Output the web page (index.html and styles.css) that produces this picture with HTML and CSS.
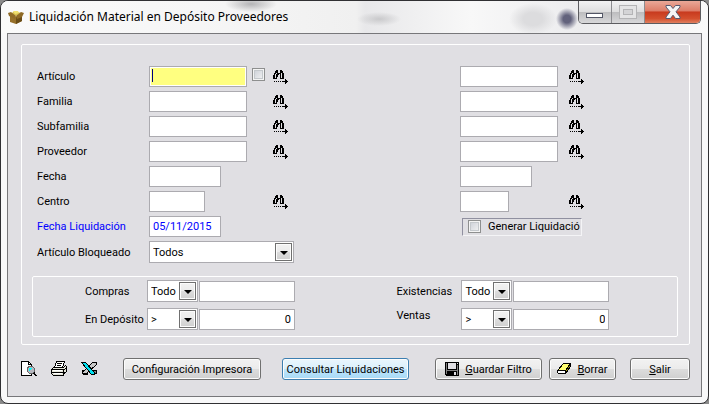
FILE: index.html
```html
<!DOCTYPE html>
<html lang="es">
<head>
    <meta charset="UTF-8">
    <title>Liquidación Material en Depósito Proveedores</title>
    <link rel="stylesheet" href="styles.css">
</head>
<body>

    <!-- iconos compartidos -->
    <svg class="sprite" width="0" height="0">
        <symbol id="find" viewBox="0 0 16 14">
            <path stroke="#000" d="M3 .5h2M7 .5h2M2 1.5h3M7 1.5h3M2 2.5h3M7 2.5h3M1 3.5h2M4 3.5h4M9 3.5h2M1 4.5h1M3 4.5h3M7 4.5h1M9 4.5h2M0 5.5h2M3 5.5h2M7 5.5h1M9 5.5h2M0 6.5h2M3 6.5h2M7 6.5h1M9 6.5h2M0 7.5h2M3 7.5h1M7 7.5h1M9 7.5h2M0 8.5h4M7 8.5h4M1 11.5h1M3 11.5h1M5 11.5h1M7 11.5h1M9 11.5h6M12 9.5h1M12 10.5h2M12 12.5h2M12 13.5h1"/>
        </symbol>
    </svg>

    <div class="window">
        <header class="titlebar">
            <svg class="app-icon" width="16" height="16" viewBox="0 0 16 16">
                <path fill="#96702a" d="M2 6l6 2 6-2v6l-6 3-6-2z"/>
                <path fill="#6a4c16" d="M8 8l6-2v6l-6 3z"/>
                <path fill="#d8c050" d="M2 5l5-3 6 2-5 3z"/>
                <path fill="#8f6a26" d="M0 4l3-1 5 4-1 3-6-3zM8 7l5-4 3 1-2 4-5 2z"/>
                <path fill="#f0e070" d="M5 2h5l1 2-4 1z"/>
            </svg>
            <h1>Liquidación Material en Depósito Proveedores</h1>
            <div class="controls">
                <button type="button" class="ctl min" aria-label="Minimizar">
                    <svg width="18" height="6" viewBox="0 0 18 6"><rect x=".5" y=".5" width="16" height="4" rx="1" fill="#fff" stroke="#535666"/></svg>
                </button>
                <button type="button" class="ctl max" aria-label="Maximizar" disabled>
                    <svg width="18" height="14" viewBox="0 0 18 14" fill="none" stroke="#b4b4b6"><rect x=".5" y=".5" width="17" height="13" rx="1" fill="#e4e4e5"/><rect x="4.500" y="4.500" width="9" height="5" fill="#d4d4d6"/></svg>
                </button>
                <button type="button" class="ctl close" aria-label="Cerrar">
                    <svg width="16" height="14" viewBox="0 0 16 14"><path fill="#f6f6f6" stroke="#565a70" stroke-linejoin="round" d="M1 .5h4.500L8 3.500 10.500.5H15V2l-4 4.800L15 12v1.500h-4.500L8 10.200 5.500 13.500H1V12l4-5.200L1 2z"/></svg>
                </button>
            </div>
        </header>

        <form class="client">
            <fieldset class="panel">
                <div class="filters">
                    <label for="articulo">Artículo</label>
                    <div class="field">
                        <input class="text active" id="articulo" type="text">
                        <input class="check" type="checkbox" aria-label="Artículo exacto">
                    </div>
                    <button type="button" class="icon" aria-label="Buscar artículo"><svg width="16" height="14"><use href="#find"/></svg></button>
                    <div class="field"><input class="text" type="text" aria-label="Artículo hasta"></div>
                    <button type="button" class="icon" aria-label="Buscar artículo hasta"><svg width="16" height="14"><use href="#find"/></svg></button>

                    <label for="familia">Familia</label>
                    <div class="field"><input class="text" id="familia" type="text"></div>
                    <button type="button" class="icon" aria-label="Buscar familia"><svg width="16" height="14"><use href="#find"/></svg></button>
                    <div class="field"><input class="text" type="text" aria-label="Familia hasta"></div>
                    <button type="button" class="icon" aria-label="Buscar familia hasta"><svg width="16" height="14"><use href="#find"/></svg></button>

                    <label for="subfamilia">Subfamilia</label>
                    <div class="field"><input class="text" id="subfamilia" type="text"></div>
                    <button type="button" class="icon" aria-label="Buscar subfamilia"><svg width="16" height="14"><use href="#find"/></svg></button>
                    <div class="field"><input class="text" type="text" aria-label="Subfamilia hasta"></div>
                    <button type="button" class="icon" aria-label="Buscar subfamilia hasta"><svg width="16" height="14"><use href="#find"/></svg></button>

                    <label for="proveedor">Proveedor</label>
                    <div class="field"><input class="text" id="proveedor" type="text"></div>
                    <button type="button" class="icon" aria-label="Buscar proveedor"><svg width="16" height="14"><use href="#find"/></svg></button>
                    <div class="field"><input class="text" type="text" aria-label="Proveedor hasta"></div>
                    <button type="button" class="icon" aria-label="Buscar proveedor hasta"><svg width="16" height="14"><use href="#find"/></svg></button>

                    <label for="fecha">Fecha</label>
                    <div class="field span2"><input class="text date" id="fecha" type="text"></div>
                    <div class="field span2"><input class="text date" type="text" aria-label="Fecha hasta"></div>

                    <label for="centro">Centro</label>
                    <div class="field"><input class="text code" id="centro" type="text"></div>
                    <button type="button" class="icon" aria-label="Buscar centro"><svg width="16" height="14"><use href="#find"/></svg></button>
                    <div class="field"><input class="text code-to" type="text" aria-label="Centro hasta"></div>
                    <button type="button" class="icon" aria-label="Buscar centro hasta"><svg width="16" height="14"><use href="#find"/></svg></button>

                    <label class="blue" for="fechaliq">Fecha Liquidación</label>
                    <div class="field span2"><input class="text date blue" id="fechaliq" type="text" value="05/11/2015"></div>
                    <div class="field span2"><label class="sunken"><input class="check" type="checkbox">Generar Liquidació</label></div>

                    <label for="bloqueado">Artículo Bloqueado</label>
                    <div class="field span2">
                        <span class="combo wide"><select id="bloqueado"><option>Todos</option></select><span class="arrow"></span></span>
                    </div>
                </div>

                <fieldset class="stock">
                    <label for="compras">Compras</label>
                    <span class="combo"><select id="compras"><option>Todo</option></select><span class="arrow"></span></span>
                    <input class="text num" type="text" aria-label="Valor compras">
                    <label for="existencias">Existencias</label>
                    <span class="combo"><select id="existencias"><option>Todo</option></select><span class="arrow"></span></span>
                    <input class="text num" type="text" aria-label="Valor existencias">

                    <label for="deposito">En Depósito</label>
                    <span class="combo"><select id="deposito"><option>&gt;</option></select><span class="arrow"></span></span>
                    <input class="text num" type="text" value="0" aria-label="Valor en depósito">
                    <label class="high" for="ventas">Ventas</label>
                    <span class="combo"><select id="ventas"><option>&gt;</option></select><span class="arrow"></span></span>
                    <input class="text num" type="text" value="0" aria-label="Valor ventas">
                </fieldset>
            </fieldset>

            <footer class="toolbar">
                <div class="tools">
                    <button type="button" class="icon" aria-label="Vista previa">
                        <svg width="16" height="16" viewBox="0 0 16 16">
                            <path fill="#fff" stroke="#000" d="M.5.5h7l3 3v11H.5z"/>
                            <path fill="none" stroke="#000" d="M7.500.5v3h3"/>
                            <path fill="#b8b8c0" stroke="#666" d="M7.500 5.500h4l2 2v3l-2 2h-3l-2-2v-3z"/>
                            <path stroke="#0ff" d="M8 7.500h3M8 8.500h2M8 9.500h1"/>
                            <path stroke="#000" d="M12 12.500h2M13 13.500h2M14 14.500h2M13 11.500h1"/>
                        </svg>
                    </button>
                    <button type="button" class="icon" aria-label="Imprimir">
                        <svg width="16" height="16" viewBox="0 0 16 16">
                            <path fill="#fff" stroke="#000" d="M5.500.5h8l-2 6h-8z"/>
                            <path stroke="#000" d="M6 2.500h5M6 4.500h4"/>
                            <path fill="#e4e4d8" stroke="#000" d="M.5 8.500l2-2h10l2-2 1 1v5l-3 3v1h-10l-2-2z"/>
                            <path stroke="#000" d="M1 8.500h11M1 11.500h11M12.500 8v6M13 8.500h1M14 7.500h1M13 11.500h2"/>
                            <path stroke="#fff" d="M2 9.500h9M3 12.500h8"/>
                        </svg>
                    </button>
                    <button type="button" class="icon" aria-label="Exportar a Excel">
                        <svg width="17" height="16" viewBox="0 0 17 16">
                            <path fill="#808080" stroke="#000" d="M1.500 9.500h4l1 3h-5zM9.500 9.500h6v3h-4z"/>
                            <path fill="#c8c8c8" stroke="#000" d="M11.500 1.500h4v2l-10 9h-4v-1z"/>
                            <path fill="#00e0f0" stroke="#000" d="M.5 1.500h4l9 10v2h-3z"/>
                            <path stroke="#000" d="M2 13.500h5"/>
                        </svg>
                    </button>
                </div>
                <button type="button" class="btn config">Configuración Impresora</button>
                <button type="submit" class="btn primary">Consultar Liquidaciones</button>
                <button type="button" class="btn save">
                    <svg width="14" height="14" viewBox="0 0 14 14">
                        <path d="M0 0h14v14H1l-1-1z"/>
                        <path fill="#e0dfe3" d="M3 1h8v6H3z"/>
                        <path fill="#808080" d="M1 1h1v11H1zM12 3h1v10h-1zM2 8h10v1H2z"/>
                        <path fill="#e0dfe3" d="M12 1h1v1h-1zM9 10h2v3H9z"/>
                    </svg>
                    <span><u>G</u>uardar Filtro</span>
                </button>
                <button type="button" class="btn clear">
                    <svg width="14" height="12" viewBox="0 0 14 12">
                        <path fill="#ffff70" stroke="#000" d="M.5 7.500l6-7h7l-5 7z"/>
                        <path fill="#fff" stroke="#000" d="M.5 7.500h8v3h-7l-1-1z"/>
                        <path fill="#a8a000" stroke="#000" d="M8.500 7.500l5-7v3l-5 7z"/>
                    </svg>
                    <span><u>B</u>orrar</span>
                </button>
                <button type="button" class="btn exit"><span><u>S</u>alir</span></button>
            </footer>
        </form>
    </div>

</body>
</html>
```
FILE: styles.css
```css
*{
    box-sizing: border-box;
    margin: 0;
    padding: 0;
}
body{
    background: #8a8a8a;
    font-family: Roboto, "Liberation Sans", Arial, sans-serif;
    font-size: 11px;
    color: #000;
}
input, select, button{
    font: inherit;
    color: inherit;
}
.sprite{
    display: none;
}
svg{
    display: block;
    flex: none;
    shape-rendering: crispEdges;
}

/* ventana */
.window{
    min-height: 100vh;
    display: flex;
    flex-direction: column;
    padding: 0 6px 6px;
    border: 1px solid #303033;
    border-radius: 8px;
    background: #f8f8f9;
    overflow: hidden;
}
.titlebar{
    display: flex;
    align-items: flex-start;
    height: 32px;
    margin: 0 -6px;
    padding: 0 7px 0 7px;
    background:
        radial-gradient(circle 11px at 566px 18px, #62627c 35%, rgba(98,98,124,0)),
        radial-gradient(ellipse 24px 16px at 532px 18px, #dcdcde 40%, rgba(220,220,222,0)),
        radial-gradient(ellipse 22px 7px at 378px 18px, #c9c9cb, rgba(208,208,210,0)),
        radial-gradient(ellipse 26px 8px at 250px 3px, #b4b4b6, rgba(190,190,192,0)),
        linear-gradient(to right, #fafafa 0, #f6f6f6 200px, #f0f0f0 355px, #e8e8ea 364px, #f8f8f8 470px, #ececee 580px, #fafafa);
}
.app-icon{
    margin-top: 8px;
    shape-rendering: auto;
}
h1{
    flex: 1;
    padding: 7px 0 0 5px;
    font: 12px/18px "Noto Sans", "Open Sans", sans-serif;
    white-space: nowrap;
}
.controls{
    display: flex;
    height: 23px;
    border: 1px solid #5c5c60;
    border-top: 0;
    border-radius: 0 0 5px 5px;
    overflow: hidden;
}
.ctl{
    display: flex;
    align-items: center;
    justify-content: center;
    width: 33px;
    border: 0;
    border-right: 1px solid #8c8c90;
    background: linear-gradient(#f2f2f3, #dededf 48%, #bdbdbf 52%, #d8d8da);
}
.min svg{
    margin-top: 8px;
}
.close{
    width: 55px;
    border-right: 0;
    background: linear-gradient(#eaa898, #dd7d68 45%, #c83a1e 50%, #d4502e 80%, #e08060);
}
.close svg{
    shape-rendering: auto;
}

/* contenido */
.client{
    flex: 1;
    padding: 10px 11px 16px 13px;
    border: 1px solid #77777a;
    background: #e0dfe3;
}
.panel{
    min-width: 0;
    padding: 21px 0 7px;
    border: 1px solid #fff;
    border-radius: 2px;
}
.filters{
    display: grid;
    grid-template-columns: 112px 124px 187fr 109px 120fr;
    grid-auto-rows: minmax(21px, auto);
    row-gap: 4px;
    align-items: center;
    padding-left: 15px;
}
.field{
    display: flex;
    align-items: flex-start;
    gap: 5px;
}
.span2{
    grid-column: span 2;
}
.blue{
    color: #00f;
}
.text{
    width: 98px;
    height: 21px;
    padding: 0 3px;
    border: 1px solid #acabb0;
    background: #fff;
    outline: none;
}
.active{
    box-shadow: inset 0 0 0 1px #fff;
    background: linear-gradient(#000080, #000080) 2px 2px / 1px 13px no-repeat #ffff80;
}
.date{
    width: 72px;
}
.code{
    width: 56px;
}
.code-to{
    width: 49px;
}
.check{
    appearance: none;
    flex: none;
    width: 13px;
    height: 13px;
    border: 1px solid #8e8f8f;
    box-shadow: inset 0 0 0 1px #f4f4f4, inset 0 0 0 2px #c4c8cc;
    background: linear-gradient(135deg, #c8ccd4, #f6f6f6);
}
.field > .check{
    margin-top: 2px;
}
.icon{
    border: 0;
    background: none;
    justify-self: start;
}
.sunken{
    display: flex;
    align-items: center;
    gap: 7px;
    width: 120px;
    height: 18px;
    margin-left: 2px;
    padding-left: 5px;
    border: 1px solid;
    border-color: #9090a0 #f4f4f6 #f4f4f6 #9090a0;
    white-space: nowrap;
}

/* desplegables */
.combo{
    display: grid;
    grid-template-columns: 1fr 17px;
    align-items: center;
    width: 51px;
    height: 22px;
    padding-right: 1px;
    border: 1px solid #acabb0;
    background: #fff;
}
.wide{
    width: 145px;
}
.combo select{
    grid-area: 1 / 1 / 2 / 3;
    appearance: none;
    height: 20px;
    padding-left: 3px;
    border: 0;
    background: none;
    outline: none;
}
.arrow{
    grid-area: 1 / 2;
    display: flex;
    align-items: center;
    justify-content: center;
    height: 18px;
    border: 1px solid #707070;
    box-shadow: inset 0 0 0 1px #fcfcfc;
    background: linear-gradient(#f2f2f2, #ebebeb 50%, #dddddd 50%, #cfcfcf);
    pointer-events: none;
}
.arrow::after{
    content: "";
    margin-top: 2px;
    border: 4px solid transparent;
    border-top-color: #000;
    border-bottom: 0;
}

.stock{
    display: grid;
    grid-template-columns: 62px 52px 198fr 65px 52px 164fr;
    row-gap: 6px;
    align-items: center;
    min-width: 0;
    margin: 13px 11px 0 10px;
    padding: 3px 0 6px 52px;
    border: 1px solid #fff;
    border-radius: 2px;
}
.num{
    width: 96px;
    text-align: right;
}
.high{
    padding-bottom: 8px;
}

/* botones */
.toolbar{
    display: flex;
    align-items: center;
    margin-top: 13px;
}
.tools{
    display: flex;
    gap: 14px;
    margin-right: 25px;
}
.btn{
    display: flex;
    align-items: center;
    justify-content: center;
    gap: 6px;
    height: 22px;
    border: 1px solid #707070;
    border-radius: 3px;
    box-shadow: inset 0 0 0 1px #fcfcfc;
    background: linear-gradient(#f2f2f2, #ebebeb 50%, #dddddd 50%, #cfcfcf);
    white-space: nowrap;
}
.config{
    width: 138px;
    margin-right: 21px;
}
.primary{
    width: 127px;
    border-color: #3c7fb1;
    background: linear-gradient(#eaf6fd, #d9f0fc 50%, #bee6fd 50%, #a7d9f5);
}
.save{
    width: 107px;
    margin-left: auto;
    margin-right: 7px;
}
.clear{
    width: 67px;
    margin-right: 14px;
}
.exit{
    width: 60px;
}
```
